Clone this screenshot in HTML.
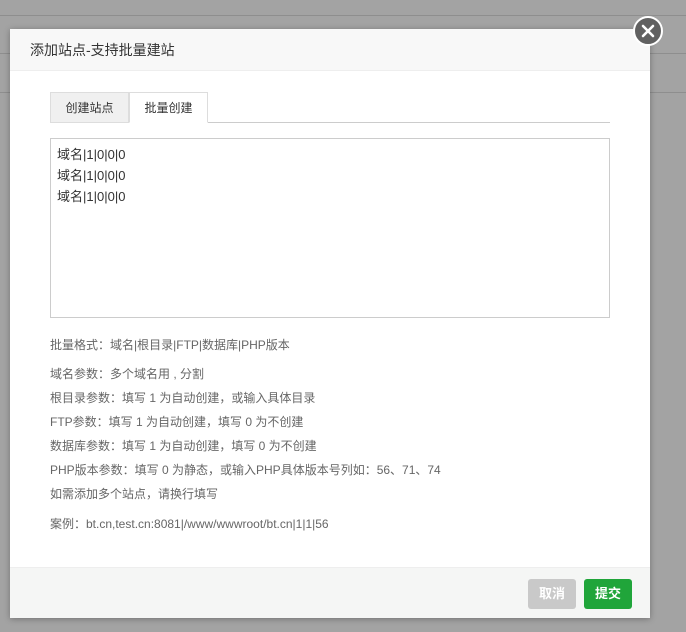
<!DOCTYPE html>
<html><head><meta charset="utf-8"><style>
*{margin:0;padding:0;box-sizing:border-box}
body{width:686px;height:632px;overflow:hidden;background:#a3a3a3;font-family:"Liberation Sans","Noto Sans CJK SC",sans-serif;position:relative}
.bgl{position:absolute;left:0;right:0;height:1px;background:#8e8e8e}
.modal{position:absolute;left:10px;top:29px;width:640px;height:589px;background:#fff;box-shadow:0 1px 6px rgba(0,0,0,.3)}
.hd{height:42px;background:#f8f8f8;border-bottom:1px solid #eee;font-size:14px;color:#333;line-height:42px;padding-left:20px}
.close{position:absolute;left:633px;top:16px;width:30px;height:30px;border-radius:50%;background:#616161;border:2px solid #fff;color:#fff;text-align:center}
.tab{position:absolute;top:92px;height:31px;width:79px;font-size:12px;color:#333;line-height:30px;text-align:center;border:1px solid #ddd}
.ta{position:absolute;left:50px;top:138px;width:560px;height:180px;border:1px solid #ccc;font-size:13px;color:#333;padding:5px 6px;line-height:21px}
.t{position:absolute;left:50px;font-size:12px;color:#666;white-space:nowrap}
.ft{position:absolute;left:10px;top:567px;width:640px;height:51px;background:#f5f6f5;border-top:1px solid #eee}
.btn{position:absolute;top:579px;width:48px;height:30px;border-radius:3px;color:#fff;font-size:13px;font-weight:bold;line-height:30px;text-align:center}
</style></head><body>
<div class="bgl" style="top:15px"></div>
<div class="bgl" style="top:53px"></div>
<div class="bgl" style="top:92px"></div>
<div class="modal"><div class="hd">添加站点-支持批量建站</div></div>
<div class="tab" style="left:50px;background:#f0f0f0">创建站点</div>
<div class="tab" style="left:129px;background:#fff;border-bottom-color:#fff">批量创建</div>
<div style="position:absolute;left:208px;top:122px;width:402px;height:1px;background:#ccc"></div>
<div class="ta">域名|1|0|0|0<br>域名|1|0|0|0<br>域名|1|0|0|0</div>
<div class="t" style="top:336px">批量格式：域名|根目录|FTP|数据库|PHP版本</div>
<div class="t" style="top:365px">域名参数：多个域名用 , 分割</div>
<div class="t" style="top:389px">根目录参数：填写 1 为自动创建，或输入具体目录</div>
<div class="t" style="top:413px">FTP参数：填写 1 为自动创建，填写 0 为不创建</div>
<div class="t" style="top:437px">数据库参数：填写 1 为自动创建，填写 0 为不创建</div>
<div class="t" style="top:461px">PHP版本参数：填写 0 为静态，或输入PHP具体版本号列如：56、71、74</div>
<div class="t" style="top:485px">如需添加多个站点，请换行填写</div>
<div class="t" style="top:515px">案例：bt.cn,test.cn:8081|/www/wwwroot/bt.cn|1|1|56</div>
<div class="ft"></div>
<div class="btn" style="left:528px;background:#c9c9c9">取消</div>
<div class="btn" style="left:584px;background:#20a53a">提交</div>
<div class="close"><svg width="26" height="26" viewBox="0 0 26 26"><path d="M8 8L18 18M18 8L8 18" stroke="#fff" stroke-width="2.6" stroke-linecap="round"/></svg></div>
</body></html>
